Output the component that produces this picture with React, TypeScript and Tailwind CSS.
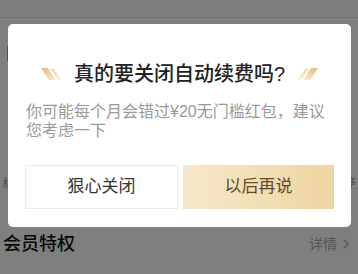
import React from 'react';

const FONT = "font-['Liberation_Sans','Noto_Sans_CJK_SC',sans-serif]";

// 标题两侧的金色斜杠装饰
function Slashes({ flip = false }: { flip?: boolean }) {
  const id = flip ? 'deco-r' : 'deco-l';
  return (
    <svg
      width="23"
      height="12"
      viewBox="0 0 23 12"
      className={flip ? '-scale-x-100' : ''}
      aria-hidden
    >
      <defs>
        <linearGradient id={id} x1="0" y1="0" x2="1" y2="1">
          <stop offset="0" stopColor="#e2bd74" />
          <stop offset="1" stopColor="#f7ecd6" />
        </linearGradient>
      </defs>
      <polygon points="0,0 7,0 15,12 8,12" fill={`url(#${id})`} />
      <polygon points="9,1 13,1 21,12 17,12" fill={`url(#${id})`} opacity="0.6" />
    </svg>
  );
}

export default function App() {
  return (
    <div className={`relative h-[274px] w-[358px] overflow-hidden bg-white ${FONT}`}>
      {/* 底层页面 */}
      <div className="h-[18px] border-b border-[#e0e0e0] bg-[#fafafa]" />
      <div className="px-[5px] pt-[24px] text-[18px] font-bold leading-[22px] text-[#111]">
        自动续费管理
      </div>
      <div className="mt-[112px] flex justify-between px-[3px] text-[11px] leading-[14px] text-[#888]">
        <span>续费</span>
        <span>暂停</span>
      </div>
      <div className="mt-[42px] flex items-center justify-between pl-[3px] pr-[8px]">
        <span className="text-[18px] font-medium leading-[24px] text-[#111]">会员特权</span>
        <span className="flex items-center gap-[5px] text-[14px] text-[#aaa]">
          详情
          <svg width="8" height="12" viewBox="0 0 8 12" aria-hidden>
            <path d="M1.5 1.5 6 6l-4.5 4.5" fill="none" stroke="#aaa" strokeWidth="1.4" />
          </svg>
        </span>
      </div>

      {/* 遮罩 */}
      <div className="absolute inset-0 bg-black/50" />

      {/* 弹窗 */}
      <div className="absolute left-[8px] top-[24px] flex h-[203px] w-[343px] flex-col rounded-[5px] bg-white px-[17px] pt-[37px]">
        <div className="flex items-center justify-center gap-[10px]">
          <Slashes />
          <h2 className="text-[20px] font-medium leading-[26px] text-[#222]">真的要关闭自动续费吗?</h2>
          <Slashes flip />
        </div>
        <p className="mt-[15px] px-px text-[16px] leading-[19px] text-[#999]">
          你可能每个月会错过¥20无门槛红包，建议您考虑一下
        </p>
        <div className="mt-[25px] flex gap-[5px]">
          <button
            type="button"
            className="h-[44px] flex-1 border border-[#ebebeb] bg-white text-[17px] text-[#333]"
          >
            狠心关闭
          </button>
          <button
            type="button"
            className="h-[44px] flex-1 bg-gradient-to-r from-[#f6e8cb] to-[#eed5a0] text-[17px] text-[#5e4a2c]"
          >
            以后再说
          </button>
        </div>
      </div>
    </div>
  );
}
